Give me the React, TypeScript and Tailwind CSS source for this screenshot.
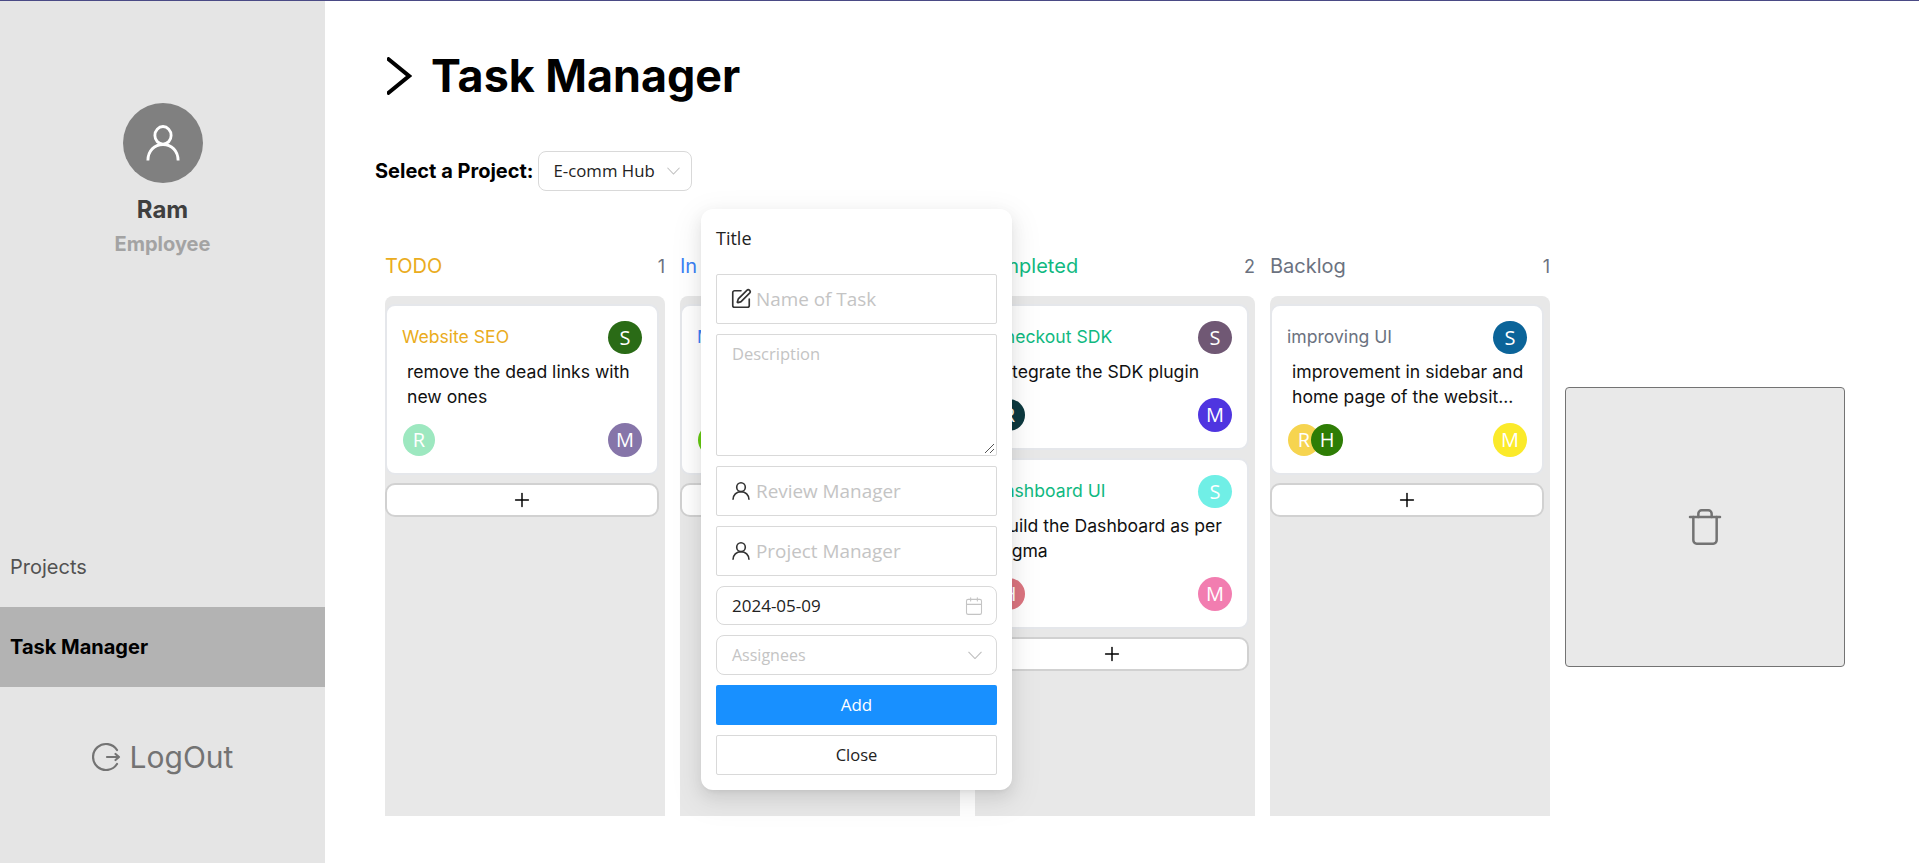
import React from "react";
import { SquarePen, Calendar, Plus, Trash } from "lucide-react";

const Avatar = ({ c, l, w = "w-[34px] h-[34px]" }: { c: string; l: string; w?: string }) => (
  <div className={`${w} rounded-full flex items-center justify-center text-white text-[20px] font-['Open_Sans',sans-serif]`} style={{ background: c }}>{l}</div>
);

const UserIcon = ({ w, h, color, sw = 1.6 }: { w: number; h: number; color: string; sw?: number }) => (
  <svg width={w} height={h} viewBox="0 0 18 18" fill="none" stroke={color} strokeWidth={sw} preserveAspectRatio="none" className="shrink-0">
    <ellipse cx="9" cy="5.2" rx="4.3" ry="4.4" />
    <path d="M1 17.8 C1 12.8 4.5 9.8 9 9.8 S17 12.8 17 17.8" />
  </svg>
);

const Chevron = ({ w }: { w: number }) => (
  <svg width={w} height={w * 0.6} viewBox="0 0 14 8.4" fill="none" stroke="#bfbfbf" strokeWidth="1.1" className="shrink-0">
    <path d="M0.5 0.8 L7 7.6 L13.5 0.8" />
  </svg>
);

type Task = { t: string; d: string[]; s: [string, string]; a: [string, string][]; m: string };

const Card = ({ task, color }: { task: Task; color: string }) => (
  <div className="bg-white border-2 border-[#e5e7eb] rounded-[10px] w-[274px] px-[15px] pt-[15px] pb-[16px] mb-[8px]">
    <div className="flex justify-between items-center h-[33px]">
      <span className="text-[17.6px]" style={{ color }}>{task.t}</span>
      <Avatar c={task.s[0]} l={task.s[1]} w="w-[34px] h-[33px]" />
    </div>
    <div className="mt-[5px] ml-[5px] text-[17.6px] leading-[25px] text-[#111]">
      {task.d.map((x) => <div key={x} className="whitespace-nowrap">{x}</div>)}
    </div>
    <div className="flex justify-between items-center mt-[14px]">
      <div className="flex">
        {task.a.map(([c, l], i) => (
          <div key={l} className={i ? "-ml-[9px] relative" : "ml-[1px]"}><Avatar c={c} l={l} w="w-[32px] h-[32px]" /></div>
        ))}
      </div>
      <Avatar c={task.m} l="M" />
    </div>
  </div>
);

const cols: { n: string; c: string; k: number; tasks: Task[] }[] = [
  { n: "TODO", c: "#eaac20", k: 1, tasks: [{ t: "Website SEO", d: ["remove the dead links with", "new ones"], s: ["#2a6b16", "S"], a: [["#9de8c0", "R"]], m: "#8675a9" }] },
  { n: "In Progress", c: "#3b82f6", k: 1, tasks: [{ t: "Mobile App", d: ["build the mobile app", "screens"], s: ["#7b5ea7", "S"], a: [["#66cc11", "R"]], m: "#8675a9" }] },
  {
    n: "Completed", c: "#10b981", k: 2, tasks: [
      { t: "Checkout SDK", d: ["Integrate the SDK plugin"], s: ["#705874", "S"], a: [["#0e3a40", "R"]], m: "#4f35e0" },
      { t: "Dashboard UI", d: ["Build the Dashboard as per", "Figma"], s: ["#70efe6", "S"], a: [["#dc7580", "H"]], m: "#f27db0" },
    ],
  },
  { n: "Backlog", c: "#6b7280", k: 1, tasks: [{ t: "improving UI", d: ["improvement in sidebar and", "home page of the websit..."], s: ["#0b6499", "S"], a: [["#f6d44f", "R"], ["#2e7d05", "H"]], m: "#fbea2a" }] },
];

const Field = ({ icon, ph }: { icon: React.ReactNode; ph: string }) => (
  <div className="h-[50px] border border-[#d9d9d9] rounded-[2px] flex items-center text-[18.9px] text-[#c4c4c4]">
    <div className="w-[33px] flex justify-end shrink-0">{icon}</div>
    <span className="ml-[6px] pt-[1px]">{ph}</span>
  </div>
);

export default function App() {
  return (
    <div className="relative w-full h-[863px] overflow-hidden bg-white font-['Inter',sans-serif] border-t border-[#4a4a85] flex">
      <aside className="w-[325px] bg-[#e5e5e5] flex flex-col items-center shrink-0">
        <div className="w-[80px] h-[80px] rounded-full bg-[#808080] mt-[102px] flex items-center justify-center">
          <UserIcon w={34} h={36} color="#fff" sw={1.5} />
        </div>
        <div className="mt-[11px] text-[24px] leading-[32px] font-bold text-[#3f3f3f]">Ram</div>
        <div className="mt-[4px] text-[20px] leading-[28px] font-bold text-[#a3a3a3]">Employee</div>
        <div className="mt-[295px] w-full pl-[10px] text-[20px] leading-[28px] text-[#525252]">Projects</div>
        <div className="mt-[26px] w-full h-[80px] bg-[#b3b3b3] flex items-center pl-[10px] text-[20px] font-bold text-black">Task Manager</div>
        <div className="mt-[52px] flex items-center gap-[8px] text-[30px] leading-[36px] text-[#737373]">
          <svg width="30" height="30" viewBox="0 0 30 30" fill="none" stroke="#737373" strokeWidth="2.2" strokeLinecap="round" strokeLinejoin="round">
            <path d="M25 8 A13 13 0 1 0 25 22" />
            <path d="M15 15 H27 M23.5 12 L27 15 L23.5 18" />
          </svg>
          <span>LogOut</span>
        </div>
      </aside>
      <main className="flex-1 min-w-0 pl-[50px]">
        <div className="flex items-center mt-[45px] ml-[12px] h-[60px]">
          <svg width="25" height="38" viewBox="0 0 25 38" fill="none" stroke="#000" strokeWidth="4"><path d="M0 1 L22 19 L0 37" /></svg>
          <h1 className="ml-[19px] text-[44.8px] font-bold text-black leading-[60px]">Task Manager</h1>
        </div>
        <div className="flex items-center mt-[45px] h-[40px]">
          <span className="text-[20px] font-bold text-black">Select a Project:</span>
          <div className="ml-[4px] w-[154px] h-[40px] border border-[#d9d9d9] rounded-lg flex items-center pl-[15px] pr-[11px] justify-between text-[#222] text-[16.8px] font-['Open_Sans',sans-serif]">
            <span>E-comm Hub</span>
            <Chevron w={13} />
          </div>
        </div>
        <div className="flex mt-[60px] ml-[10px] gap-[15px] items-start">
          {cols.map((c) => (
            <div key={c.n} className="w-[280px]">
              <div className="flex justify-between items-center h-[30px] text-[20px] text-[#6b7280]">
                <span style={{ color: c.c }}>{c.n}</span><span className="text-[18px]">{c.k}</span>
              </div>
              <div className="mt-[15px] h-[520px] bg-[#e8e8e8] rounded-t-lg pt-[8px]">
                {c.tasks.map((t) => <Card key={t.t} task={t} color={c.c} />)}
                <div className="w-[274px] h-[34px] bg-white border-2 border-[#d1d1d1] rounded-[10px] flex items-center justify-center">
                  <Plus className="w-[22px] h-[22px] text-black" strokeWidth={1.6} />
                </div>
              </div>
            </div>
          ))}
          <div className="w-[280px] h-[280px] mt-[136px] bg-[#e9e9e9] border border-[#737373] rounded-[4px] flex items-center justify-center">
            <Trash className="w-[40px] h-[40px] text-[#737373]" strokeWidth={1.5} />
          </div>
        </div>
      </main>
      <div className="absolute left-[701px] top-[208px] w-[311px] h-[581px] bg-white rounded-xl shadow-[0_6px_16px_rgba(0,0,0,0.08),0_3px_6px_-4px_rgba(0,0,0,0.12),0_9px_28px_8px_rgba(0,0,0,0.05)] px-[15px] pt-[15px] font-['Open_Sans',sans-serif]">
        <div className="h-[50px] text-[18px] leading-[28px] text-[#222] font-medium">Title</div>
        <div className="flex flex-col gap-[10px]">
          <Field icon={<SquarePen className="w-[22px] h-[22px] text-[#333] mr-[-2px]" strokeWidth={1.8} />} ph="Name of Task" />
          <div className="h-[122px] border border-[#d9d9d9] rounded-[2px] pl-[15px] pt-[7px] text-[16.5px] text-[#c4c4c4] relative">
            Description
            <svg className="absolute right-[1px] bottom-[1px]" width="11" height="11" viewBox="0 0 11 11" stroke="#555" strokeWidth="1"><path d="M1 10 L10 1 M6 10 L10 6" /></svg>
          </div>
          <Field icon={<UserIcon w={18} h={18} color="#333" />} ph="Review Manager" />
          <Field icon={<UserIcon w={18} h={18} color="#333" />} ph="Project Manager" />
          <div className="h-[39px] border border-[#d9d9d9] rounded-lg flex items-center justify-between pl-[15px] pr-[12px] text-[17px] text-[#222]">
            <span>2024-05-09</span>
            <Calendar className="w-[20px] h-[20px] text-[#c4c4c4]" strokeWidth={1.3} />
          </div>
          <div className="h-[40px] border border-[#d9d9d9] rounded-lg flex items-center justify-between pl-[15px] pr-[14px] text-[16px] text-[#c4c4c4]">
            <span>Assignees</span>
            <Chevron w={14} />
          </div>
          <div className="h-[40px] bg-[#1890ff] rounded-[2px] text-white text-[17px] flex items-center justify-center">Add</div>
          <div className="h-[40px] border border-[#d9d9d9] rounded-[2px] text-[#222] text-[16.5px] flex items-center justify-center">Close</div>
        </div>
      </div>
    </div>
  );
}
